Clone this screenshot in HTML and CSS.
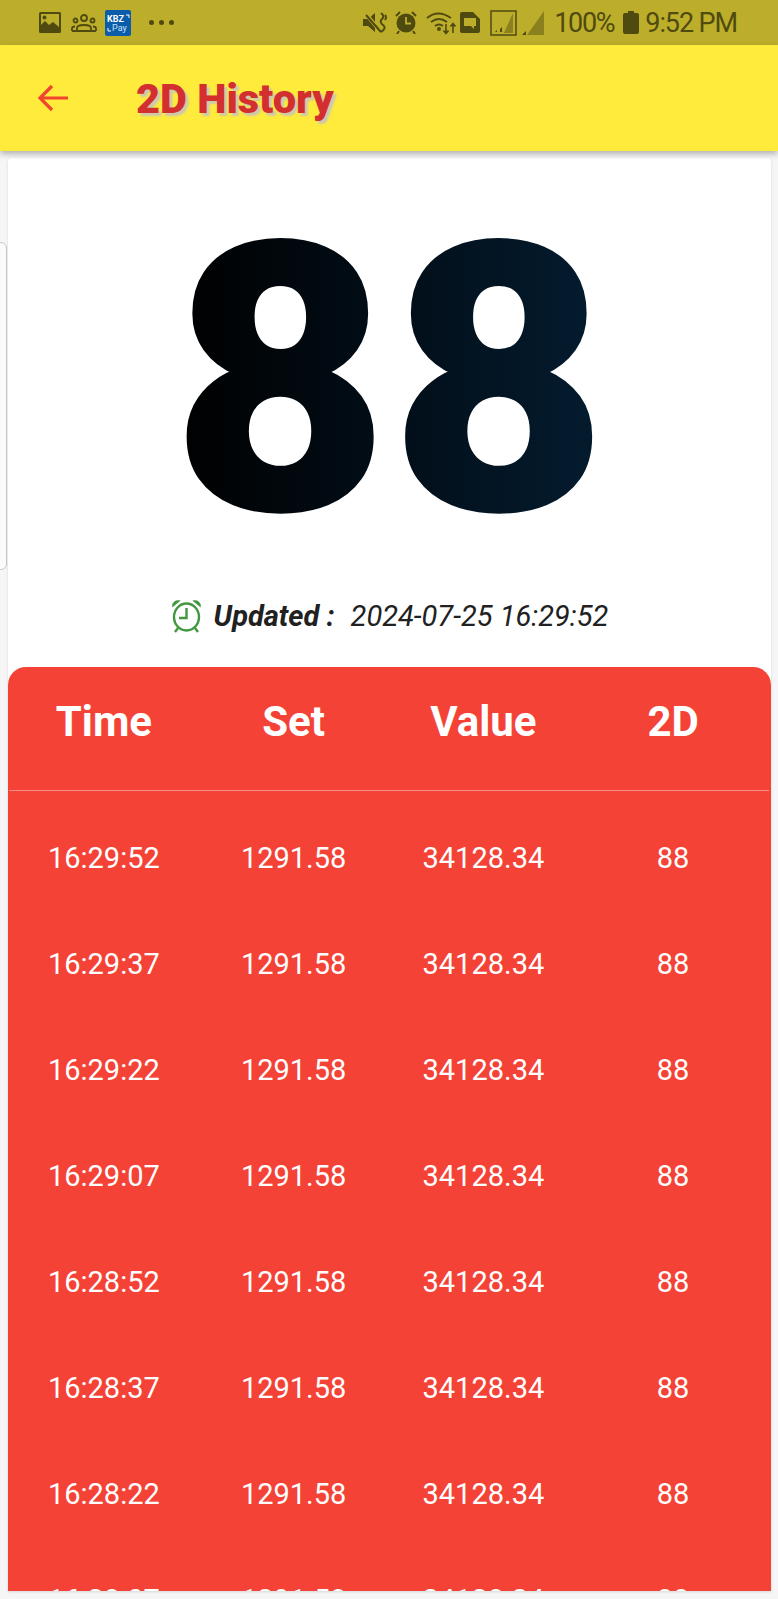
FILE: index.html
```html
<!DOCTYPE html>
<html lang="en">
<head>
<meta charset="utf-8">
<title>2D History</title>
<link rel="stylesheet" href="styles.css">
</head>
<body>
<div class="phone">
  <header class="status">
    <div class="status-left">
      <svg class="ic-image" viewBox="0 0 22 21"><path fill="#4f4a10" fill-rule="evenodd" d="M1.5 0h19A1.5 1.5 0 0 1 22 1.500v18a1.500 1.500 0 0 1-1.500 1.500h-19A1.500 1.500 0 0 1 0 19.500v-18A1.500 1.500 0 0 1 1.500 0zM2 2v11l4-4 4 4 4-3 6 5V2zM5.500 3.500a2 2 0 1 1 0 4 2 2 0 0 1 0-4z"/></svg>
      <svg class="ic-people" viewBox="0 0 26 18"><g fill="none" stroke="#4f4a10" stroke-width="1.800"><circle cx="13" cy="4" r="3"/><circle cx="4.500" cy="6.500" r="2"/><circle cx="21.500" cy="6.500" r="2"/><path d="M6 17v-3q0-3 7-3t7 3v3zM1 17v-2.500q0-2 3-2M25 17v-2.500q0-2-3-2M1 17h24"/></g></svg>
      <svg class="ic-kbz" viewBox="0 0 26 26"><rect width="26" height="26" rx="2" fill="#0b5cab"/><text x="2" y="12" class="kbz-a">KBZ</text><text x="7" y="21" class="kbz-b">Pay</text><path d="M3 18v3h3M21 5h3v3" fill="none" stroke="#fff" stroke-width="1"/></svg>
      <div class="dots"><i></i><i></i><i></i></div>
    </div>
    <div class="status-right">
      <svg class="ic-mute" viewBox="0 0 25 21"><path fill="#4f4a10" d="M0 7h5l7-6v19l-7-6H0z"/><path d="M2 1l16 19" stroke="#bcae2a" stroke-width="4"/><path d="M3 3l15 17" stroke="#4f4a10" stroke-width="2"/><path d="M18 1q4 3 1 6t1 6-2 7M22 3q2 2 0 5" fill="none" stroke="#4f4a10" stroke-width="2"/></svg>
      <svg class="ic-alarm" viewBox="0 0 22 23"><circle cx="11" cy="12" r="9.500" fill="#4f4a10"/><path d="M11 6v6.500h5" fill="none" stroke="#bcae2a" stroke-width="1.800"/><path d="M1 5l4-4M21 5l-4-4M4 20l-2 3M18 20l2 3" stroke="#4f4a10" stroke-width="2"/></svg>
      <svg class="ic-wifi" viewBox="0 0 31 24"><g fill="none" stroke="#4f4a10" stroke-width="1.800"><path d="M1 7q11-9 24 0M5 11q8-6 16 0M9 15q4-3 8 0"/></g><circle cx="13" cy="18" r="2" fill="#4f4a10"/><path d="M20 13v9M17.500 19.500l2.500 3 2.500-3M27 22v-9M24.500 15.500l2.500-3 2.500 3" fill="none" stroke="#4f4a10" stroke-width="1.600"/></svg>
      <svg class="ic-sim" viewBox="0 0 20 21"><path fill="#4f4a10" fill-rule="evenodd" d="M2 0h11l7 7v12a2 2 0 0 1-2 2H2a2 2 0 0 1-2-2V2a2 2 0 0 1 2-2zM4 6v8h7l3 3v-3h2V6z"/></svg>
      <svg class="ic-sig1" viewBox="0 0 27 26"><rect x="1" y="1" width="25" height="24" fill="none" stroke="#4f4a10" stroke-width="1.500"/><path d="M23 3v20h-9z" fill="#4f4a10" opacity=".45"/><path d="M5 22h2v-2zM10 22h2v-5l-2 2z" fill="#4f4a10"/></svg>
      <svg class="ic-sig2" viewBox="0 0 23 24"><path d="M22 0v24H5z" fill="#4f4a10" opacity=".45"/><path d="M0 24h4v-4z" fill="#4f4a10"/></svg>
      <span class="pct">100%</span>
      <svg class="ic-batt" viewBox="0 0 16 23"><path fill="#4f4a10" d="M5 0h6v2h3a2 2 0 0 1 2 2v17a2 2 0 0 1-2 2H2a2 2 0 0 1-2-2V4a2 2 0 0 1 2-2h3z"/></svg>
      <span class="clock">9:52 PM</span>
    </div>
  </header>

  <div class="toolbar">
    <svg class="back" viewBox="0 0 32 28"><path d="M31 14H3M15 2L3 14l12 12" fill="none" stroke="#f2452f" stroke-width="3.200"/></svg>
    <h1 class="title">2D History</h1>
  </div>

  <div class="peek"></div>

  <main class="content">
    <section class="hero">
      <div class="number">88</div>
      <div class="updated">
        <svg class="ic-clock" viewBox="0 0 31 34"><g fill="none" stroke="#43973f" stroke-width="2.400"><ellipse cx="15.500" cy="18" rx="12.500" ry="13.500"/><path d="M15.500 9v10H8"/><path d="M7 29l-3 4M24 29l3 4"/></g><path d="M2 7a5 5 0 0 1 6-5zM29 7a5 5 0 0 0-6-5z" fill="#43973f" stroke="#43973f" stroke-width="1.500"/></svg>
        <b class="up-label">Updated :</b>
        <span class="up-date">2024-07-25 16:29:52</span>
      </div>
    </section>

    <section class="table">
      <div class="row head"><span>Time</span><span>Set</span><span>Value</span><span>2D</span></div>
      <div class="rows">
        <div class="row"><span>16:29:52</span><span>1291.58</span><span>34128.34</span><span>88</span></div>
        <div class="row"><span>16:29:37</span><span>1291.58</span><span>34128.34</span><span>88</span></div>
        <div class="row"><span>16:29:22</span><span>1291.58</span><span>34128.34</span><span>88</span></div>
        <div class="row"><span>16:29:07</span><span>1291.58</span><span>34128.34</span><span>88</span></div>
        <div class="row"><span>16:28:52</span><span>1291.58</span><span>34128.34</span><span>88</span></div>
        <div class="row"><span>16:28:37</span><span>1291.58</span><span>34128.34</span><span>88</span></div>
        <div class="row"><span>16:28:22</span><span>1291.58</span><span>34128.34</span><span>88</span></div>
        <div class="row"><span>16:28:07</span><span>1291.58</span><span>34128.34</span><span>88</span></div>
      </div>
    </section>
  </main>
</div>
</body>
</html>
```
FILE: styles.css
```css
* { box-sizing: border-box; }
html, body { margin: 0; padding: 0; }
body { background: #f6f6f6; font-family: Roboto, "Liberation Sans", sans-serif; }
.phone { position: relative; width: 778px; height: 1599px; overflow: hidden; }

.status { height: 45px; background: #bcae2a; display: flex; justify-content: space-between; align-items: center; color: #4f4a10; padding: 0 41px 0 39px; }
.status-left, .status-right { display: flex; align-items: center; }
.status svg { display: block; flex: none; }
.ic-image { width: 22px; height: 21px; }
.ic-people { width: 26px; height: 18px; margin-left: 10px; }
.ic-kbz { width: 26px; height: 26px; margin-left: 8px; }
.kbz-a { font: 700 9px Roboto, sans-serif; fill: #fff; }
.kbz-b { font: 400 9px Roboto, sans-serif; fill: #cfe0f5; }
.dots { display: flex; gap: 5px; margin-left: 18px; }
.dots i { width: 5px; height: 5px; border-radius: 50%; background: #4f4a10; }
.ic-mute { width: 25px; height: 21px; }
.ic-alarm { width: 22px; height: 23px; margin-left: 7px; }
.ic-wifi { width: 31px; height: 24px; margin-left: 9px; }
.ic-sim { width: 20px; height: 21px; margin-left: 3px; }
.ic-sig1 { width: 27px; height: 26px; margin-left: 10px; }
.ic-sig2 { width: 23px; height: 24px; margin-left: 5px; }
.pct { font-size: 27px; letter-spacing: -1.3px; margin-left: 9px; }
.ic-batt { width: 16px; height: 23px; margin-left: 9px; }
.clock { font-size: 27px; letter-spacing: -1.1px; margin-left: 6px; }

.toolbar { position: relative; z-index: 2; height: 106px; background: #ffeb3b; display: flex; align-items: center; padding-left: 37px; box-shadow: 0 3px 6px rgba(0, 0, 0, .28); }
.back { width: 32px; height: 28px; }
.title { margin: 0 0 0 67px; font-size: 41.500px; font-weight: 900; color: #d32f2f; text-shadow: 3px 3px 2px #cdc9ac; }

.peek { position: absolute; left: -20px; top: 242px; width: 27px; height: 328px; border: 1px solid #c9c9c9; border-radius: 6px; background: #fbfbfb; }

.content { position: relative; margin: 7px 7px 0 8px; height: 1433px; display: flex; flex-direction: column; background: #fff; border-radius: 4px 4px 0 0; box-shadow: 0 1px 3px rgba(0, 0, 0, .12); }
.hero { height: 509px; display: flex; flex-direction: column; align-items: center; }
.number { height: 436px; padding-top: 10px; font-size: 377px; line-height: 426px; font-weight: 900; background: linear-gradient(90deg, #000 0%, #041c30 100%); -webkit-background-clip: text; background-clip: text; color: transparent; }
.updated { display: flex; align-items: center; margin-top: 5px; color: #212121; font-style: italic; font-size: 29px; }
.ic-clock { width: 31px; height: 34px; flex: none; }
.up-label { margin-left: 12px; font-weight: 700; }
.up-date { margin-left: 16px; }

.table { flex: 1; min-height: 0; overflow: hidden; background: #f44336; color: #fff; border-radius: 18px 18px 0 0; }
.row { display: grid; grid-template-columns: repeat(4, 1fr); text-align: center; align-items: center; height: 106px; font-size: 29px; padding: 0 3px 0 1px; }
.head { height: 124px; font-size: 42px; font-weight: 700; border-bottom: 1px solid rgba(255, 255, 255, .4); margin: 0 2px 0 1px; padding: 0 1px 14px 0; }
.rows { padding-top: 14px; }
```
